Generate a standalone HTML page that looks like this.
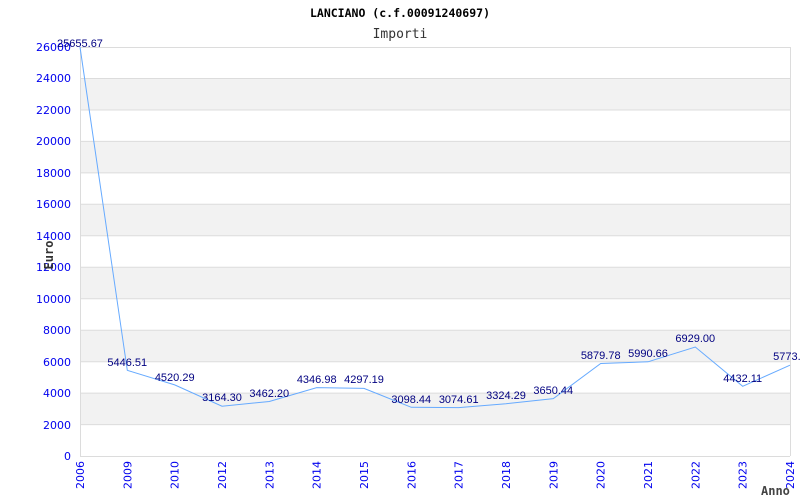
<!DOCTYPE html>
<html><head><meta charset="utf-8"><style>html,body{margin:0;padding:0;background:#fff}svg{display:block}</style></head><body>
<svg width="800" height="500" xmlns="http://www.w3.org/2000/svg">
<g fill="#f2f2f2">
<rect x="80" y="78.5" width="710" height="31.5"/>
<rect x="80" y="141.4" width="710" height="31.5"/>
<rect x="80" y="204.3" width="710" height="31.5"/>
<rect x="80" y="267.3" width="710" height="31.5"/>
<rect x="80" y="330.2" width="710" height="31.5"/>
<rect x="80" y="393.1" width="710" height="31.5"/>
</g>
<g stroke="#dcdcdc" stroke-width="1">
<line x1="80" y1="47.5" x2="790" y2="47.5"/>
<line x1="80" y1="78.5" x2="790" y2="78.5"/>
<line x1="80" y1="110" x2="790" y2="110"/>
<line x1="80" y1="141.4" x2="790" y2="141.4"/>
<line x1="80" y1="172.9" x2="790" y2="172.9"/>
<line x1="80" y1="204.3" x2="790" y2="204.3"/>
<line x1="80" y1="235.8" x2="790" y2="235.8"/>
<line x1="80" y1="267.3" x2="790" y2="267.3"/>
<line x1="80" y1="298.7" x2="790" y2="298.7"/>
<line x1="80" y1="330.2" x2="790" y2="330.2"/>
<line x1="80" y1="361.7" x2="790" y2="361.7"/>
<line x1="80" y1="393.1" x2="790" y2="393.1"/>
<line x1="80" y1="424.6" x2="790" y2="424.6"/>
<line x1="80.5" y1="47" x2="80.5" y2="456"/>
<line x1="790.5" y1="47" x2="790.5" y2="456"/>
<line x1="80" y1="456.5" x2="790" y2="456.5"/>
</g>
<polyline fill="none" stroke="#66aaff" stroke-width="1" points="80,47 127.3,370.3 174.7,384.9 222,406.2 269.3,401.5 316.7,387.6 364,388.4 411.3,407.3 458.7,407.6 506,403.7 553.3,398.6 600.7,363.5 648,361.8 695.3,347 742.7,386.3 790,365.2"/>
<g font-family="DejaVu Sans Mono, monospace" text-anchor="middle" fill="#000">
<text x="400" y="17" font-size="11.5" font-weight="bold">LANCIANO (c.f.00091240697)</text>
<text x="400" y="38" font-size="13" fill="#333">Importi</text>
</g>
<g font-family="DejaVu Sans, sans-serif" font-size="11" fill="#0000ee" text-anchor="end">
<text x="71" y="51">26000</text><text x="71" y="82">24000</text><text x="71" y="114">22000</text>
<text x="71" y="145">20000</text><text x="71" y="177">18000</text><text x="71" y="208">16000</text>
<text x="71" y="240">14000</text><text x="71" y="271">12000</text><text x="71" y="303">10000</text>
<text x="71" y="334">8000</text><text x="71" y="366">6000</text><text x="71" y="397">4000</text>
<text x="71" y="429">2000</text><text x="71" y="460">0</text>
</g>
<g font-family="DejaVu Sans, sans-serif" font-size="11" fill="#0000ee" text-anchor="end">
<text transform="translate(84,461) rotate(-90)">2006</text>
<text transform="translate(131.3,461) rotate(-90)">2009</text>
<text transform="translate(178.7,461) rotate(-90)">2010</text>
<text transform="translate(226,461) rotate(-90)">2012</text>
<text transform="translate(273.3,461) rotate(-90)">2013</text>
<text transform="translate(320.7,461) rotate(-90)">2014</text>
<text transform="translate(368,461) rotate(-90)">2015</text>
<text transform="translate(415.3,461) rotate(-90)">2016</text>
<text transform="translate(462.7,461) rotate(-90)">2017</text>
<text transform="translate(510,461) rotate(-90)">2018</text>
<text transform="translate(557.3,461) rotate(-90)">2019</text>
<text transform="translate(604.7,461) rotate(-90)">2020</text>
<text transform="translate(652,461) rotate(-90)">2021</text>
<text transform="translate(699.3,461) rotate(-90)">2022</text>
<text transform="translate(746.7,461) rotate(-90)">2023</text>
<text transform="translate(794,461) rotate(-90)">2024</text>
</g>
<text transform="translate(53,255) rotate(-90)" text-anchor="middle" font-family="DejaVu Sans Mono, monospace" font-size="12" font-weight="bold" fill="#333">Euro</text>
<text x="761" y="495" font-family="DejaVu Sans Mono, monospace" font-size="12" font-weight="bold" fill="#444">Anno</text>
<g font-family="Liberation Sans, DejaVu Sans, sans-serif" font-size="11" fill="#000080" text-anchor="middle">
<text x="80" y="47">25655.67</text>
<text x="127.3" y="366">5446.51</text>
<text x="174.7" y="381">4520.29</text>
<text x="222" y="401">3164.30</text>
<text x="269.3" y="397">3462.20</text>
<text x="316.7" y="383">4346.98</text>
<text x="364" y="383">4297.19</text>
<text x="411.3" y="403">3098.44</text>
<text x="458.7" y="403">3074.61</text>
<text x="506" y="399">3324.29</text>
<text x="553.3" y="394">3650.44</text>
<text x="600.7" y="359">5879.78</text>
<text x="648" y="357">5990.66</text>
<text x="695.3" y="342">6929.00</text>
<text x="742.7" y="382">4432.11</text>
<text x="790" y="360">5773.3</text>
</g>
</svg>
</body></html>
